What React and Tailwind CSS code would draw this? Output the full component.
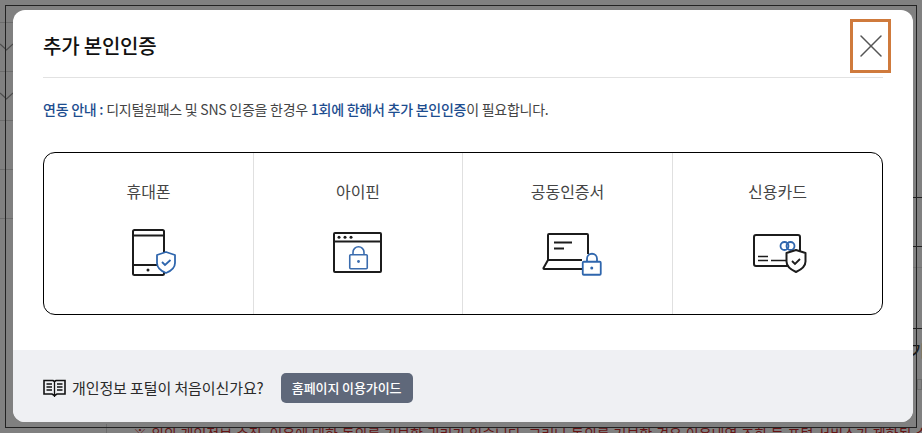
import React from 'react';
import { X } from 'lucide-react';

const METHODS = [
    { label: '휴대폰', icon: PhoneIcon, divider: true },
    { label: '아이핀', icon: IpinIcon, divider: true },
    { label: '공동인증서', icon: CertIcon, divider: true },
    { label: '신용카드', icon: CardIcon, divider: false },
];

function PhoneIcon() {
    return (
        <svg width="60" height="48" viewBox="0 0 60 48" fill="none" className="overflow-visible">
            <rect x="14" y="2" width="31" height="45" rx="1.5" stroke="#1c1c1c" strokeWidth="2" />
            <path d="M14 7.500h31M14 37h31" stroke="#1c1c1c" strokeWidth="1.800" />
            <circle cx="29" cy="42" r="1.500" fill="#1c1c1c" />
            <path d="M47 24l9 3v8c0 5-4 8-9 10-5-2-9-5-9-10v-8z" fill="#fff" stroke="#2f66ad" strokeWidth="1.800" strokeLinejoin="round" />
            <path d="M43 34l3 3 5.500-5" stroke="#2f66ad" strokeWidth="1.800" />
        </svg>
    );
}

function IpinIcon() {
    return (
        <svg width="61" height="48" viewBox="0 0 61 48" fill="none" className="overflow-visible">
            <rect x="6" y="5" width="47" height="39" rx="1" stroke="#1c1c1c" strokeWidth="2" />
            <path d="M6 13.500h47" stroke="#1c1c1c" strokeWidth="1.800" />
            <circle cx="11" cy="9.300" r="1.500" fill="#1c1c1c" />
            <circle cx="17" cy="9.300" r="1.500" fill="#1c1c1c" />
            <circle cx="23" cy="9.300" r="1.500" fill="#1c1c1c" />
            <rect x="21.750" y="26.750" width="17.500" height="14" rx="1" stroke="#3a6cae" strokeWidth="1.600" />
            <path d="M25 26.750v-2.500a5.500 5.500 0 0 1 11 0v2.500" stroke="#3a6cae" strokeWidth="1.600" />
            <circle cx="30.500" cy="33.500" r="1.400" fill="#3a6cae" />
        </svg>
    );
}

function CertIcon() {
    return (
        <svg width="60" height="48" viewBox="0 0 60 48" fill="none" className="overflow-visible">
            <path d="M10 32V7a1 1 0 0 1 1-1h38a1 1 0 0 1 1 1v19" stroke="#1c1c1c" strokeWidth="2" />
            <path d="M44 32H10l-4.500 8a.7.7 0 0 0 .6 1H44" stroke="#1c1c1c" strokeWidth="2" strokeLinejoin="round" />
            <path d="M16 14.500h18M16 20.500h10" stroke="#1c1c1c" strokeWidth="1.800" />
            <rect x="44.750" y="33.750" width="18" height="13" rx="1" fill="#fff" stroke="#2f66ad" strokeWidth="1.800" />
            <path d="M49 33.750v-3a5 5 0 0 1 10 0v3" stroke="#2f66ad" strokeWidth="1.800" />
            <circle cx="53.750" cy="40" r="1.500" fill="#2f66ad" />
        </svg>
    );
}

function CardIcon() {
    return (
        <svg width="61" height="48" viewBox="0 0 61 48" fill="none" className="overflow-visible">
            <rect x="7" y="7" width="46" height="31" rx="2" stroke="#1c1c1c" strokeWidth="2" />
            <circle cx="37.500" cy="18" r="4" stroke="#2f66ad" strokeWidth="1.800" />
            <circle cx="43.500" cy="18" r="4" stroke="#2f66ad" strokeWidth="1.800" />
            <path d="M11 28.500h10M11 32.500h10M24 32.500h15" stroke="#1c1c1c" strokeWidth="1.500" />
            <path d="M49 22l9.500 3v8.500c0 5-4 8-9.500 10.500-5.500-2.500-9.500-5.500-9.500-10.500V25z" fill="#fff" stroke="#1c1c1c" strokeWidth="2" strokeLinejoin="round" />
            <path d="M45 33l3 3 5-5" stroke="#1c1c1c" strokeWidth="1.800" />
        </svg>
    );
}

function BookIcon() {
    return (
        <svg width="23" height="18" viewBox="0 0 23 18" fill="none">
            <path d="M1 1.500h9l1.500 1 1.500-1h9v13.500h-8l-2.500 1.500-2.500-1.500H1z" stroke="#111" strokeWidth="1.600" />
            <path d="M11.500 2.500V18M3.500 5h5.500M3.500 8h5.500M3.500 11h5.500M14 5h5.500M14 8h5.500M14 11h5.500" stroke="#111" strokeWidth="1.300" />
        </svg>
    );
}

function Chevron() {
    return (
        <svg width="13" height="8" viewBox="0 0 13 8" fill="none">
            <path d="M0 1l6.500 6L13 1" stroke="#4c4c4c" strokeWidth="1.200" />
        </svg>
    );
}

// the page behind the dimmed overlay
function Backdrop() {
    return (
        <div className="absolute inset-0 flex">
            <div className="w-[13px] flex flex-col">
                <div className="h-[23px] border-b border-[#6c6c6c]" />
                <div className="h-[49px] flex items-center border-b border-[#6c6c6c]"><Chevron /></div>
                <div className="h-[49px] flex items-center border-b border-[#6c6c6c]"><Chevron /></div>
                <div className="h-[49px] border-b border-[#6c6c6c]" />
                <div className="h-[49px] border-b border-[#6c6c6c]" />
            </div>

            <div className="flex-1 min-w-0 flex flex-col justify-end">
                <div className="ml-[93px] h-[9px] pl-[26px] border-l border-[#6c6c6c] whitespace-nowrap text-[14px] leading-[21px] text-[#661414] font-['Liberation_Sans','Noto_Sans_CJK_KR',sans-serif]">
                    ※ 위의 개인정보 수집, 이용에 대한 동의를 거부할 권리가 있습니다. 그러나 동의를 거부할 경우 이용내역 조회 등 포털 서비스가 제한될 수 있습니다.
                </div>
            </div>

            <div className="w-[9px] pt-[197px] flex flex-col">
                <div className="h-[49px] border-t border-[#222]" />
                <div className="h-[21px] border-t border-[#222]" />
                <div className="h-[61px] border-t border-[#727272]" />
                <div className="h-[10px] border-t border-[#222]" />
                <span className="-ml-[2px] h-[24px] text-[16px] leading-[24px] font-medium text-[#1a1a1a]">기</span>
                <div className="mt-[17px] ml-[4px] h-[11px] border border-[#6c6c6c]" />
            </div>
        </div>
    );
}

export default function App() {
    return (
        <div className="relative w-[922px] h-[433px] pl-[13px] pt-[10px] overflow-hidden bg-[#808080] font-['Noto_Sans_CJK_KR','Noto_Sans',sans-serif]">
            <Backdrop />
            <div className="absolute left-[5px] right-[5px] top-[5px] bottom-[5px] border border-[#222]" />

            {/* Modal */}
            <div className="relative w-[900px] h-[412px] flex flex-col bg-white rounded-xl overflow-hidden">
                <div className="mx-[30px] h-[68px] flex items-start justify-between border-b border-[#e2e2e2]">
                    <h2 className="mt-[21px] text-[20px] leading-[30px] font-medium text-[#111] tracking-[-0.2px]">추가 본인인증</h2>
                    <button className="mt-[9px] -mr-[8px] w-[41px] h-[54px] flex items-center justify-center border-[3px] border-[#cf7a3c] text-[#555]">
                        <X size={40} strokeWidth={0.9} className="shrink-0" />
                    </button>
                </div>

                <p className="mx-[30px] mt-[21px] text-[14px] leading-[20px] text-[#444] tracking-[-0.25px]">
                    <b className="font-medium text-[#1d4d8f]">연동 안내 : </b>
                    디지털원패스 및 SNS 인증을 한경우 <b className="font-medium text-[#1d4d8f]">1회에 한해서 추가 본인인증</b>이 필요합니다.
                </p>

                <div className="mx-[30px] mt-[33px] h-[163px] grid grid-cols-[210px_209px_210px_209px] border border-black rounded-xl">
                    {METHODS.map(({ label, icon: Icon, divider }) => (
                        <div key={label} className={`flex flex-col items-center pt-[24px] ${divider ? 'border-r border-[#e0e0e0]' : ''}`}>
                            <span className="text-[16px] leading-[28px] text-[#444]">{label}</span>
                            <div className="mt-[23px] h-[48px]"><Icon /></div>
                        </div>
                    ))}
                </div>

                <div className="mt-auto h-[72px] px-[30px] pt-[4px] flex items-center bg-[#eff0f3]">
                    <BookIcon />
                    <span className="ml-[6px] text-[15px] text-[#2a2a2a] tracking-[-0.1px]">개인정보 포털이 처음이신가요?</span>
                    <button className="ml-[17px] w-[132px] h-[30px] rounded-[5px] bg-[#5f687a] text-[13px] font-medium text-white tracking-[-0.1px]">
                        홈페이지 이용가이드
                    </button>
                </div>
            </div>
        </div>
    );
}
